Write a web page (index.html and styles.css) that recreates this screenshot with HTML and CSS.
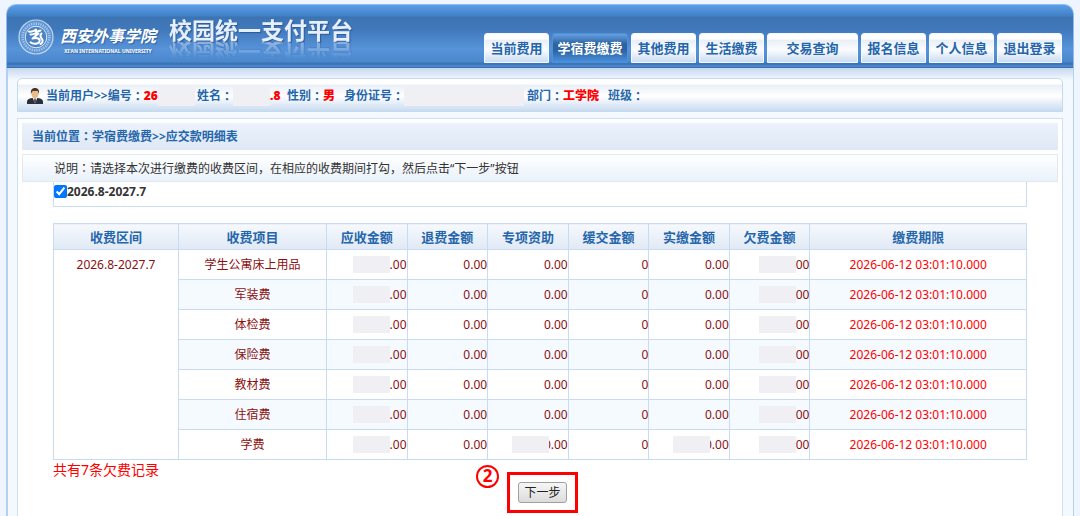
FILE: index.html
```html
<!DOCTYPE html>
<html lang="zh-CN">
<head>
<meta charset="utf-8">
<title>校园统一支付平台</title>
<link rel="stylesheet" href="styles.css">
</head>
<body>
<div class="frame">
  <header class="header">
    <div class="brand">
      <svg class="seal" viewBox="0 0 36 36" aria-hidden="true">
        <circle cx="18" cy="18" r="17" fill="#5c94d4" stroke="#c3d8f2" stroke-width="1.2"/>
        <circle cx="18" cy="18" r="13.4" fill="none" stroke="#a3c3ea" stroke-width="2.6" stroke-dasharray="1.4 1"/>
        <circle cx="18" cy="18" r="10.8" fill="#4b82c3" stroke="#dfebf9" stroke-width="1"/>
        <path d="M11 12.500c3 .8 5-.4 7-2l-.5 2.500 5-1.500M12.500 15.500c3 0 6-1.500 8-1l-6 5c5-1 8 0 7 3-1 2.800-6.500 3-9 .8M23.500 14.500c-2 2-.8 4 .5 5.500s.5 4-1.500 5" fill="none" stroke="#fff" stroke-width="2" stroke-linecap="round" stroke-linejoin="round"/>
      </svg>
      <div class="school">
        <span class="school-cn">西安外事学院</span>
        <span class="school-en">XI'AN INTERNATIONAL UNIVERSITY</span>
      </div>
      <h1 class="title">校园统一支付平台</h1>
    </div>
    <nav class="tabs">
      <a class="tab" href="#current">当前费用</a>
      <a class="tab tab-active" href="#tuition">学宿费缴费</a>
      <a class="tab" href="#other">其他费用</a>
      <a class="tab" href="#living">生活缴费</a>
      <a class="tab tab-wide" href="#query">交易查询</a>
      <a class="tab" href="#signup">报名信息</a>
      <a class="tab" href="#profile">个人信息</a>
      <a class="tab" href="#logout">退出登录</a>
    </nav>
  </header>

  <div class="body">
    <section class="user">
      <svg class="avatar" viewBox="0 0 16 16" aria-hidden="true">
        <path d="M0 16v-2.500c0-2 2-3 5-3.500h6c3 .5 5 1.500 5 3.500V16z" fill="#2b2f38"/>
        <path d="M5.500 9.500h5L8 15.500z" fill="#f4f4f4"/>
        <path d="M7.300 10.500h1.400l.5 3L8 15.500l-1.200-2z" fill="#50545e"/>
        <ellipse cx="8" cy="5.800" rx="3.600" ry="4.600" fill="#e9bd8a"/>
        <path d="M4 6C3.400 2 5 0 8 0s4.600 2 4 6c-.6-2-1-3-2-3.200-1.500.4-3 .3-4-.1C5 3.500 4.500 4.500 4 6z" fill="#4b3420"/>
      </svg>
      <span class="field f-id">当前用户&gt;&gt;编号<i class="pn" lang="zh-TW">：</i><b class="val">26</b><i class="mask mask-id"></i></span>
      <span class="field f-name">姓名<i class="pn" lang="zh-TW">：</i><i class="mask mask-name"></i><b class="val">.8</b></span>
      <span class="field f-sex">性别<i class="pn" lang="zh-TW">：</i><b class="val">男</b></span>
      <span class="field f-card">身份证号<i class="pn" lang="zh-TW">：</i><i class="mask mask-card"></i></span>
      <span class="field f-dept">部门<i class="pn" lang="zh-TW">：</i><b class="val">工学院</b></span>
      <span class="field">班级<i class="pn" lang="zh-TW">：</i></span>
    </section>

    <main class="panel">
      <div class="crumb">当前位置<i class="pn" lang="zh-TW">：</i>学宿费缴费&gt;&gt;应交款明细表</div>
      <p class="note">说明<i class="pn" lang="zh-TW">：</i>请选择本次进行缴费的收费区间，在相应的收费期间打勾，然后点击“下一步”按钮</p>
      <div class="content">
        <div class="period">
          <input type="checkbox" id="period" checked>
          <label for="period">2026.8-2027.7</label>
        </div>
        <table class="fees">
          <colgroup>
            <col class="c-period"><col class="c-item"><col class="c-num"><col class="c-num"><col class="c-num"><col class="c-num"><col class="c-num"><col class="c-num"><col>
          </colgroup>
          <thead>
            <tr><th>收费区间</th><th>收费项目</th><th>应收金额</th><th>退费金额</th><th>专项资助</th><th>缓交金额</th><th>实缴金额</th><th>欠费金额</th><th>缴费期限</th></tr>
          </thead>
          <tbody>
            <tr><td class="span" rowspan="7">2026.8-2027.7</td><td>学生公寓床上用品</td><td class="n"><i class="mask"></i>.00</td><td class="n">0.00</td><td class="n">0.00</td><td class="n">0</td><td class="n">0.00</td><td class="n"><i class="mask"></i>00</td><td class="due">2026-06-12 03:01:10.000</td></tr>
            <tr><td>军装费</td><td class="n"><i class="mask"></i>.00</td><td class="n">0.00</td><td class="n">0.00</td><td class="n">0</td><td class="n">0.00</td><td class="n"><i class="mask"></i>00</td><td class="due">2026-06-12 03:01:10.000</td></tr>
            <tr><td>体检费</td><td class="n"><i class="mask"></i>.00</td><td class="n">0.00</td><td class="n">0.00</td><td class="n">0</td><td class="n">0.00</td><td class="n"><i class="mask"></i>00</td><td class="due">2026-06-12 03:01:10.000</td></tr>
            <tr><td>保险费</td><td class="n"><i class="mask"></i>.00</td><td class="n">0.00</td><td class="n">0.00</td><td class="n">0</td><td class="n">0.00</td><td class="n"><i class="mask"></i>00</td><td class="due">2026-06-12 03:01:10.000</td></tr>
            <tr><td>教材费</td><td class="n"><i class="mask"></i>.00</td><td class="n">0.00</td><td class="n">0.00</td><td class="n">0</td><td class="n">0.00</td><td class="n"><i class="mask"></i>00</td><td class="due">2026-06-12 03:01:10.000</td></tr>
            <tr><td>住宿费</td><td class="n"><i class="mask"></i>.00</td><td class="n">0.00</td><td class="n">0.00</td><td class="n">0</td><td class="n">0.00</td><td class="n"><i class="mask"></i>00</td><td class="due">2026-06-12 03:01:10.000</td></tr>
            <tr><td>学费</td><td class="n"><i class="mask"></i>.00</td><td class="n">0.00</td><td class="n"><i class="mask mask-over"></i>0.00</td><td class="n">0</td><td class="n"><i class="mask mask-over"></i>0.00</td><td class="n"><i class="mask"></i>00</td><td class="due">2026-06-12 03:01:10.000</td></tr>
          </tbody>
        </table>
        <div class="foot">
          <p class="count">共有7条欠费记录</p>
          <div class="mark">
            <span class="step">2</span>
            <button class="next" type="button">下一步</button>
          </div>
        </div>
      </div>
    </main>
  </div>
</div>
</body>
</html>
```

FILE: styles.css
```css
* { box-sizing: border-box; }

body {
  margin: 0;
  min-height: 100vh;
  display: flex;
  padding: 4px 6px 0;
  background: #eff5fe;
  color: #333;
  font: 12px/18px "Noto Sans", "Noto Sans CJK SC", sans-serif;
}

p, h1 { margin: 0; }
i { font-style: normal; }

.pn { font-family: "Noto Sans CJK TC", sans-serif; line-height: 1; }

.frame {
  flex: 1;
  min-width: 0;
  display: flex;
  flex-direction: column;
}

/* header */
.header {
  height: 64px;
  display: flex;
  justify-content: space-between;
  align-items: flex-end;
  padding: 0 11px 5px;
  border: 1px solid #8fbcec;
  border-bottom: 0;
  border-radius: 10px 10px 0 0;
  background: linear-gradient(#5a9ee9 0, #4280c4 11px, #3c74b3 12px, #4078bb 24px, #5793d9 44px, #4a87cb 57px, #3c74b8 58px, #3c74b8 60px, #5c98dc 61px, #3a70b2 62px, #3a70b2 64px);
}

.brand { display: flex; align-self: flex-start; padding-top: 12px; }
.seal { width: 36px; height: 36px; margin: 2px 4px 0 0; }

.school {
  display: flex;
  flex-direction: column;
  align-items: center;
  width: 100px;
  padding-top: 5px;
  color: #fff;
  text-shadow: 1px 1px 1px #2f619d;
  white-space: nowrap;
}
.school-cn { font: italic bold 16px/26px "Noto Sans CJK SC", sans-serif; }
.school-en { font: bold 5px/6px "Noto Sans", sans-serif; }

.title {
  height: 26px;
  margin-left: 5px;
  padding-left: 6px;
  color: #e6effb;
  font: bold 23px/24px "Noto Sans CJK SC", sans-serif;
  text-shadow: 1px 1px 1px #2d5b94;
  white-space: nowrap;
  -webkit-box-reflect: below -4px linear-gradient(transparent 25%, rgba(0, 0, 0, 0.5));
}

.tabs { display: flex; gap: 3px; }
.tab {
  width: 65px;
  height: 30px;
  border: 1px solid #f4f9ff;
  border-radius: 3px 3px 0 0;
  background: linear-gradient(#fff 0, #fff 5px, #e9eff7 6px, #fbfcfe 16px, #cbdcf1);
  color: #2566ab;
  font-size: 13px;
  font-weight: bold;
  line-height: 29px;
  text-align: center;
  text-decoration: none;
  white-space: nowrap;
}
.tab-active {
  width: 76px;
  border-color: #4f8fd4;
  background: linear-gradient(#66a0e4 0, #2d639f 10px, #2c629f 16px, #4a90dd);
  color: #fff;
}
.tab-wide { width: 91px; }

/* page body */
.body {
  flex: 1;
  display: flex;
  flex-direction: column;
  gap: 6px;
  padding: 10px 10px 0 9px;
  border: solid #b4d2f0;
  border-width: 0 1px 0 2px;
  background: linear-gradient(#c6d8ef, #f4f9ff 12px);
}

.user {
  display: flex;
  align-items: center;
  height: 34px;
  padding: 1px 9px 0;
  border: 1px solid #c5d9ef;
  border-radius: 5px 5px 0 0;
  background: linear-gradient(#fff 0, #fff 5px, #e9eff7 6px, #fff 17px, #c9dbf1);
  color: #2566ab;
  font-weight: bold;
  white-space: nowrap;
}
.avatar { width: 16px; height: 16px; margin-right: 3px; }
.field { display: flex; align-items: center; }
.val { color: #f00; }
.mask {
  display: inline-block;
  width: 37px;
  height: 17px;
  background: #f0eff3;
}
.mask-id { height: 20px; }
.mask-name { height: 20px; }
.mask-card { width: 120px; height: 20px; }
.f-id { width: 151px; }
.f-name { width: 90px; }
.f-sex { width: 57px; }
.f-card { width: 183px; }
.f-dept { width: 81px; }

.panel {
  flex: 1;
  padding: 4px;
  border: solid #cfe0f3;
  border-width: 1px 1px 0;
  background: #fff;
}
.crumb {
  height: 27px;
  padding-left: 10px;
  background: linear-gradient(#ebf2fc, #dfe8f4);
  color: #2566ab;
  font-weight: bold;
  line-height: 27px;
}
.note {
  height: 28px;
  margin-top: 4px;
  padding-left: 31px;
  border: 1px solid #dfe8f3;
  background: linear-gradient(#fff, #e9f1fa);
  line-height: 27px;
}

.content { padding: 0 31px; }
.period {
  display: flex;
  align-items: center;
  height: 25px;
  margin-bottom: 16px;
  padding-bottom: 5px;
  border: 1px solid #c9dcf2;
  border-top: 0;
  font-weight: bold;
}
.period input { width: 13px; height: 13px; margin: 0; }

/* fee table */
.fees {
  width: 100%;
  table-layout: fixed;
  border-collapse: collapse;
  color: #8b1010;
  text-align: center;
}
.c-period { width: 125px; }
.c-item { width: 148px; }
.c-num { width: 8.28%; }
.fees th, .fees td { padding: 0; border: 1px solid #c8dbf3; }
.fees th {
  height: 26px;
  background: linear-gradient(#f6f9fd, #e0e9f5);
  color: #2566ab;
  font-size: 13px;
}
.fees td { height: 30px; }
.fees tbody tr:nth-child(even) { background: #f5faff; }
.fees .span { background: #fff; vertical-align: top; padding-top: 6px; }
.fees .n { text-align: right; white-space: nowrap; }
.fees .mask { vertical-align: -4px; }
.fees .mask-over { position: relative; margin-right: -5px; }
.fees .due { color: #f00; }

.foot {
  display: grid;
  grid-template-columns: 1fr auto 1fr;
}
.count { color: #f00; font-size: 14px; line-height: 20px; }
.mark {
  position: relative;
  margin: 12px 0 0 5px;
  padding: 7px 8px;
  border: 3px solid #f00;
}
.step {
  position: absolute;
  left: -34px;
  top: -10px;
  width: 23px;
  height: 23px;
  border: 2px solid #f00;
  border-radius: 50%;
  color: #f00;
  font-size: 17px;
  font-weight: bold;
  line-height: 18px;
  text-align: center;
}
.next {
  display: block;
  width: 49px;
  height: 21px;
  padding: 0;
  border: 1px solid #a0a0a0;
  border-radius: 3px;
  background: linear-gradient(#f6f6f6, #dcdcdc);
  color: #222;
  font: 12px/18px "Noto Sans", "Noto Sans CJK SC", sans-serif;
}
```
